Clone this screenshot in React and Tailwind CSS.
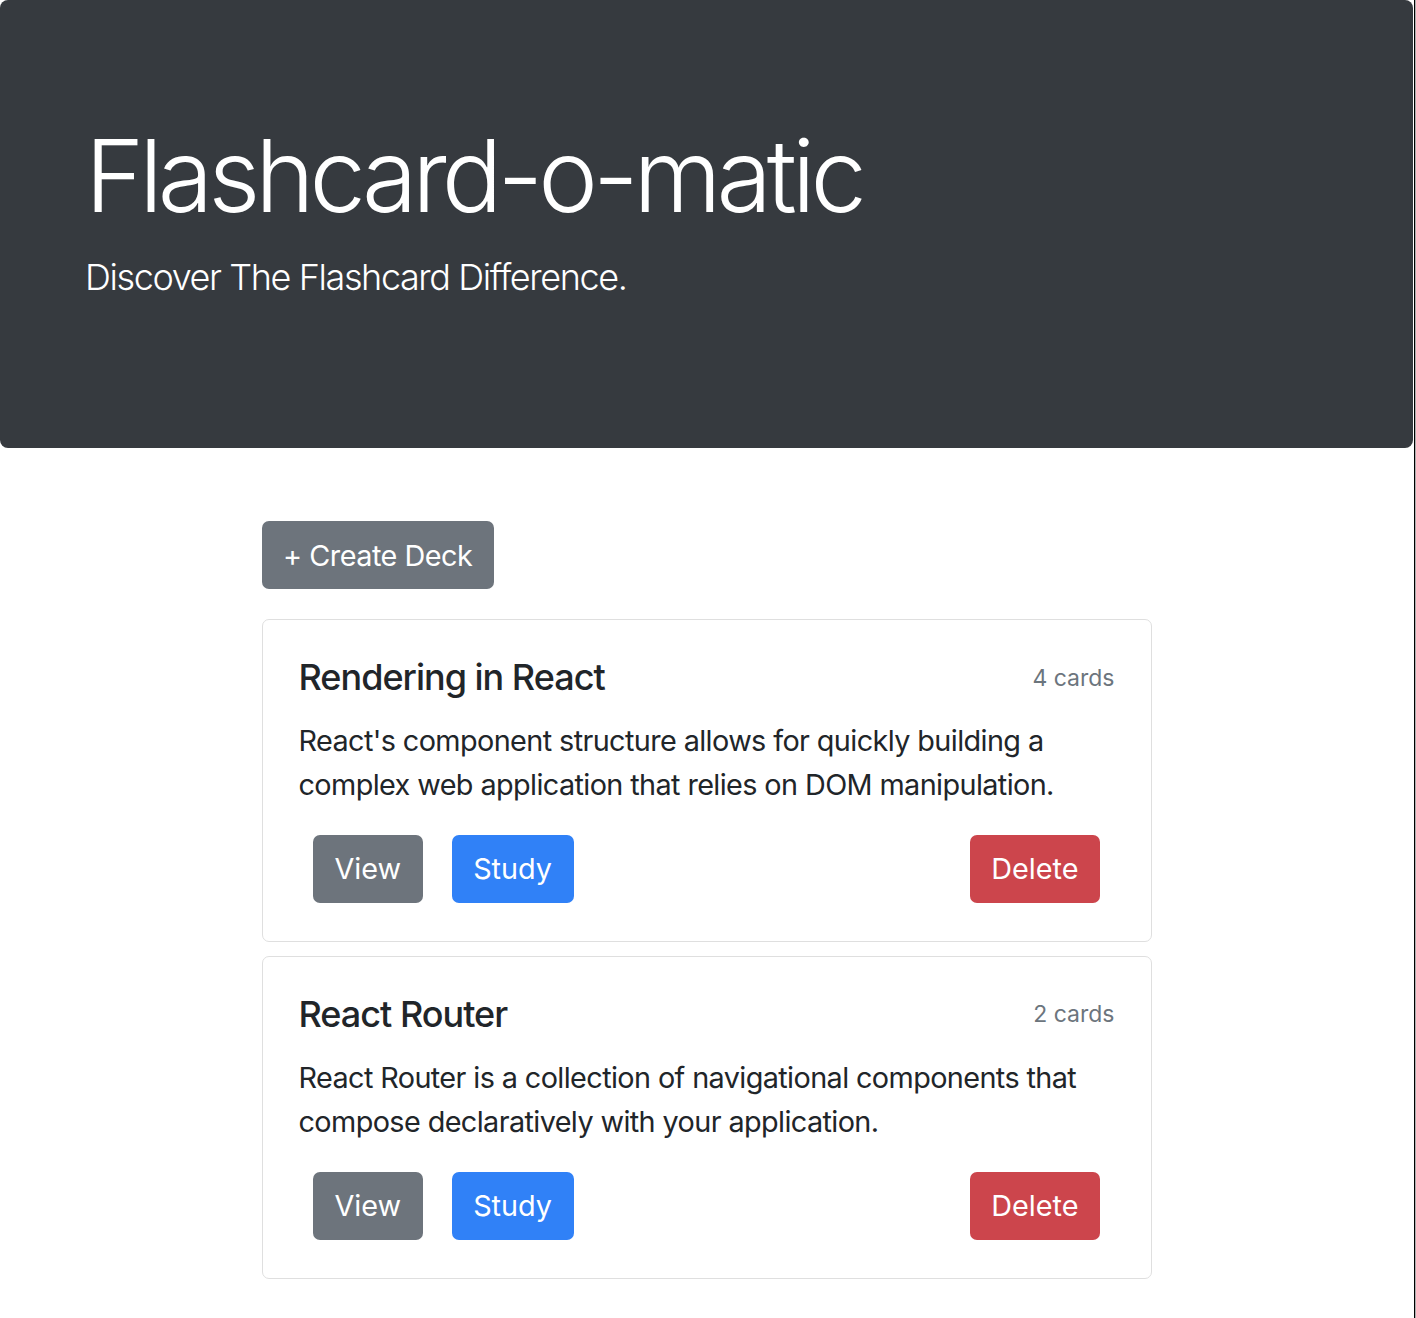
import React from "react";

const decks = [
  {
    id: 1,
    name: "Rendering in React",
    description:
      "React's component structure allows for quickly building a complex web application that relies on DOM manipulation.",
    count: 4,
  },
  {
    id: 2,
    name: "React Router",
    description:
      "React Router is a collection of navigational components that compose declaratively with your application.",
    count: 2,
  },
];

function DeckCard({ deck }) {
  return (
    <div className="border-[1.8px] border-[#dfdfdf] rounded-[7px] px-[36px] pt-[36px] pb-[38px] bg-white">
      <div className="flex justify-between items-center">
        <h5 className="text-[36px] leading-[43.2px] font-medium tracking-[-1px] text-[#212529]">
          {deck.name}
        </h5>
        <small className="text-[23px] text-[#6c757d]">{deck.count} cards</small>
      </div>
      <p className="mt-[20px] mb-[28.8px] text-[28.8px] leading-[43.2px] tracking-[-0.6px] text-[#212529]">
        {deck.description}
      </p>
      <div className="flex">
        <button className="mx-[14.4px] h-[68px] px-[21.6px] rounded-[7px] bg-[#6d747c] text-white text-[28.8px]">
          View
        </button>
        <button className="mx-[14.4px] h-[68px] px-[21.6px] rounded-[7px] bg-[#3081f7] text-white text-[28.8px]">
          Study
        </button>
        <button className="ml-auto mx-[14.4px] h-[68px] px-[21.6px] rounded-[7px] bg-[#cc454c] text-white text-[28.8px]">
          Delete
        </button>
      </div>
    </div>
  );
}

export default function App() {
  return (
    <div
      className="flex min-h-[1318px] bg-white"
      style={{ fontFamily: "Inter, 'Noto Sans', sans-serif" }}
    >
      <div className="w-[1413px] shrink-0">
        {/* HEADER */}
        <header className="bg-[#363a3f] rounded-[8px] pt-[115px] pb-[115px] px-[85px] text-white">
          <h1 className="text-[100.8px] leading-[121px] font-light tracking-[-5px]">
            Flashcard-o-matic
          </h1>
          <p className="mt-[14.4px] mb-[28.8px] text-[36px] leading-[54px] font-light tracking-[-1.4px]">
            Discover The Flashcard Difference.
          </p>
        </header>

        {/* DECKS */}
        <main className="w-[890px] mx-auto mt-[73px] pb-[38px]">
          <button className="h-[68px] px-[21.6px] rounded-[7px] bg-[#6d747c] text-white text-[28.8px] tracking-[-0.5px]">
            + Create Deck
          </button>
          <div className="mt-[30px] flex flex-col gap-[14.5px]">
            {decks.map((d) => (
              <DeckCard key={d.id} deck={d} />
            ))}
          </div>
        </main>
      </div>

      {/* window edge */}
      <div className="w-[3px] flex">
        <div className="w-px bg-white" />
        <div className="w-px bg-black" />
        <div className="w-px bg-[#b0b0b0]" />
      </div>
    </div>
  );
}
